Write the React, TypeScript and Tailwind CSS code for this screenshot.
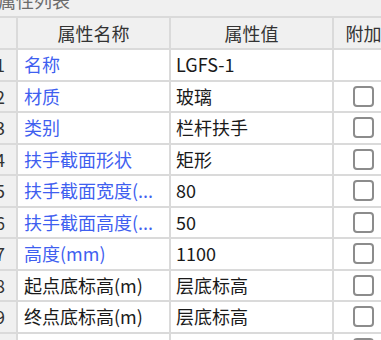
import { Fragment } from 'react';

const rows = [
  { no: '1', name: '名称', value: 'LGFS-1', blue: true, check: false },
  { no: '2', name: '材质', value: '玻璃', blue: true, check: true },
  { no: '3', name: '类别', value: '栏杆扶手', blue: true, check: true },
  { no: '4', name: '扶手截面形状', value: '矩形', blue: true, check: true },
  { no: '5', name: '扶手截面宽度(...', value: '80', blue: true, check: true },
  { no: '6', name: '扶手截面高度(...', value: '50', blue: true, check: true },
  { no: '7', name: '高度(mm)', value: '1100', blue: true, check: true },
  { no: '8', name: '起点底标高(m)', value: '层底标高', blue: false, check: true },
  { no: '9', name: '终点底标高(m)', value: '层底标高', blue: false, check: true },
  { no: '10', name: '', value: '', blue: false, check: true },
];

function Checkbox() {
  return <div className="w-[21px] h-[21px] rounded-[4px] border-2 border-[#8c8c8c] bg-white" />;
}

export default function App() {
  return (
    <div className="w-[381px] h-[340px] overflow-hidden bg-[#f0f0f0] font-['Noto_Sans_CJK_SC',sans-serif] text-[18px]">
      {/* panel title, scrolled partly out of view */}
      <div className="h-[16px] overflow-hidden">
        <div className="-mt-[12px] -ml-[2px] leading-[24px] text-[#6b6b6b] whitespace-nowrap">属性列表</div>
      </div>
      <div className="grid grid-cols-[16px_151px_161px_59px] gap-[2px] w-[393px] bg-[#dadada] border-y-2 border-[#dadada]">
        <div className="h-[30px] bg-[#f0f0f0]" />
        <div className="h-[30px] bg-[#f0f0f0] flex items-center justify-center text-[#333]">属性名称</div>
        <div className="h-[30px] bg-[#f0f0f0] flex items-center justify-center text-[#333]">属性值</div>
        <div className="h-[30px] bg-[#f0f0f0] flex items-center justify-center text-[#333] whitespace-nowrap">附加</div>
        {rows.map((r) => (
          <Fragment key={r.no}>
            <div className="h-[29.5px] bg-[#f0f0f0] flex items-center justify-end pr-[11px] overflow-hidden text-[#333]">
              {r.no}
            </div>
            <div className={`h-[29.5px] bg-white flex items-center pl-[6px] whitespace-nowrap overflow-hidden ${r.blue ? 'text-[#3f5ff0]' : 'text-[#1a1a1a]'}`}>
              {r.name}
            </div>
            <div className="h-[29.5px] bg-white flex items-center pl-[5px] whitespace-nowrap text-[#1a1a1a]">
              {r.value}
            </div>
            <div className="h-[29.5px] bg-white flex items-center justify-center">
              {r.check && <Checkbox />}
            </div>
          </Fragment>
        ))}
      </div>
    </div>
  );
}
